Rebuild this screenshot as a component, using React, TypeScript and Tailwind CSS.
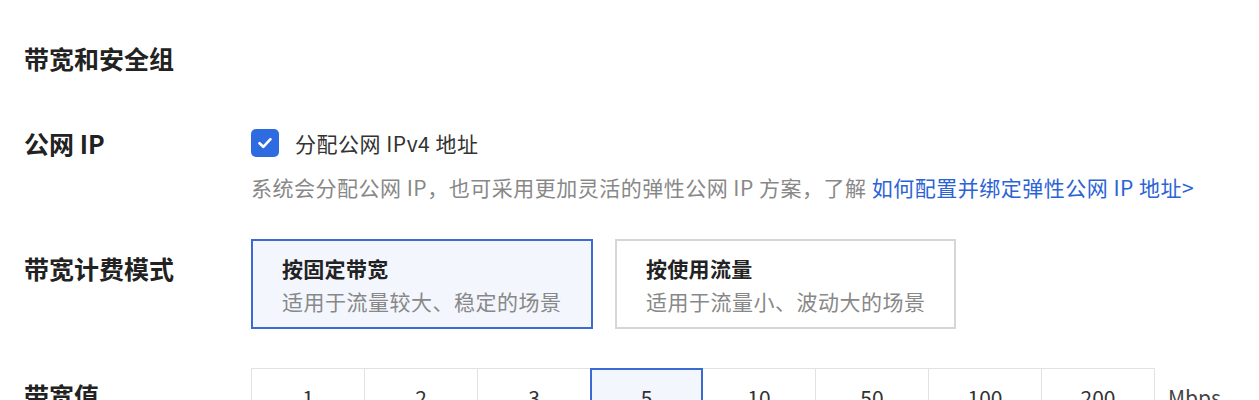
import React, { useState } from 'react';

const font = { fontFamily: '"Noto Sans CJK SC", "Noto Sans", sans-serif' };

const App = () => {
  const [assignIp, setAssignIp] = useState(true);
  const [mode, setMode] = useState('fixed');
  const [bandwidth, setBandwidth] = useState(5);

  const modes = [
    { id: 'fixed', title: '按固定带宽', desc: '适用于流量较大、稳定的场景', width: 'w-[342px]' },
    { id: 'traffic', title: '按使用流量', desc: '适用于流量小、波动大的场景', width: 'w-[341px]' },
  ];
  const values = [1, 2, 3, 5, 10, 50, 100, 200];

  return (
    <div className="min-h-[400px] bg-white pl-6 pt-[42px] text-[#222]" style={font}>
      <h2 className="text-[25px] font-semibold leading-8">带宽和安全组</h2>

      {/* 公网 IP */}
      <div className="mt-[55px] flex">
        <div className="w-[227px] shrink-0 text-[25px] font-semibold leading-7">公网 IP</div>
        <div>
          <label className="flex cursor-pointer items-center gap-4">
            <span
              onClick={() => setAssignIp(!assignIp)}
              className={`flex h-7 w-7 items-center justify-center rounded-[5px] ${assignIp ? 'bg-[#2f6be0]' : 'border-2 border-[#c8c8c8] bg-white'}`}
            >
              {assignIp && (
                <svg width="18" height="18" viewBox="0 0 18 18" fill="none">
                  <path d="M3.5 9.2 7.3 12.8 14.5 5.2" stroke="white" strokeWidth="2.6" strokeLinecap="round" strokeLinejoin="round" />
                </svg>
              )}
            </span>
            <span className="text-[21px] leading-7 tracking-[0.5px] text-[#333]">分配公网 IPv4 地址</span>
          </label>
          <p className="mt-4 text-[21px] leading-7 tracking-[0.5px] text-[#888]">
            系统会分配公网 IP，也可采用更加灵活的弹性公网 IP 方案，了解{' '}
            <a className="text-[#2b63d6]">如何配置并绑定弹性公网 IP 地址&gt;</a>
          </p>
        </div>
      </div>

      {/* 带宽计费模式 */}
      <div className="mt-[38px] flex items-start">
        <div className="w-[227px] shrink-0 pt-[15px] text-[25px] font-semibold leading-7">带宽计费模式</div>
        <div className="flex gap-[22px]">
          {modes.map((m) => (
            <div
              key={m.id}
              onClick={() => setMode(m.id)}
              className={`${m.width} h-[90px] cursor-pointer border-2 pl-[29px] pt-[13px] ${mode === m.id ? 'border-[#3b6bd0] bg-[#f3f6fd]' : 'border-[#d6d6d6] bg-white'}`}
            >
              <div className="text-[21px] font-semibold leading-7 tracking-[0.3px] text-[#222]">{m.title}</div>
              <div className="mt-[5px] text-[21px] leading-7 tracking-[0.5px] text-[#888]">{m.desc}</div>
            </div>
          ))}
        </div>
      </div>

      {/* 带宽值 */}
      <div className="mt-[39px] flex items-start">
        <div className="w-[227px] shrink-0 pt-[13px] text-[25px] font-semibold leading-7">带宽值</div>
        <div className="flex items-center">
          <div className="flex border-l border-[#e2e2e2]">
            {values.map((v) => (
              <div
                key={v}
                onClick={() => setBandwidth(v)}
                className={`flex h-[58px] w-[113px] cursor-pointer items-center justify-center pt-[2px] text-[21px] text-[#333] ${
                  bandwidth === v
                    ? '-ml-px border-2 border-[#3b6bd0] bg-[#f3f6fd]'
                    : 'border-y border-r border-[#e2e2e2] bg-white'
                }`}
              >
                {v}
              </div>
            ))}
          </div>
          <span className="ml-[13px] pt-[2px] text-[21px] text-[#444]">Mbps</span>
        </div>
      </div>
    </div>
  );
};

export default App;
